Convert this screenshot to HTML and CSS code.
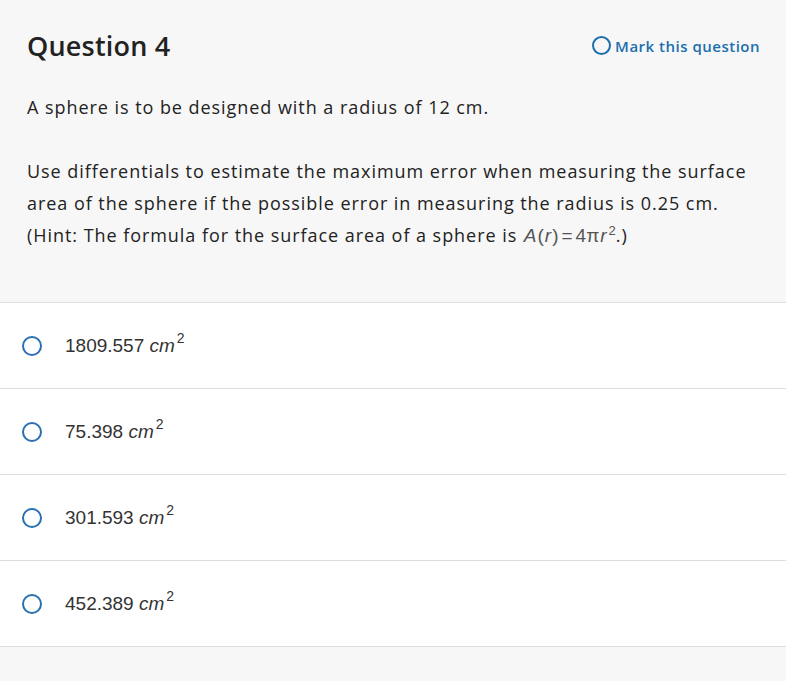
FILE: index.html
```html
<!DOCTYPE html>
<html lang="en">
<head>
    <meta charset="UTF-8">
    <meta name="viewport" content="width=device-width, initial-scale=1.0">
    <title>Question 4</title>
    <link rel="stylesheet" href="styles.css">
</head>
<body>
    <div class="question">
        <div class="question-head">
            <h2 class="question-title">Question 4</h2>
            <a class="mark" href="#">
                <span class="mark-circle"></span>
                Mark this question
            </a>
        </div>
        <p class="prompt">A sphere is to be designed with a radius of 12 cm.</p>
        <p class="prompt">Use differentials to estimate the maximum error when measuring the surface area of the sphere if the possible error in measuring the radius is 0.25 cm. (Hint: The formula for the surface area of a sphere is <span class="math"><i>A</i>(<i>r</i>)<span class="eq">=</span>4π<i>r</i><sup>2</sup></span>.)</p>
    </div>
    <ul class="answers">
        <li class="answer"><span class="radio"></span><span class="answer-text">1809.557 <i>cm</i><sup>2</sup></span></li>
        <li class="answer"><span class="radio"></span><span class="answer-text">75.398 <i>cm</i><sup>2</sup></span></li>
        <li class="answer"><span class="radio"></span><span class="answer-text">301.593 <i>cm</i><sup>2</sup></span></li>
        <li class="answer"><span class="radio"></span><span class="answer-text">452.389 <i>cm</i><sup>2</sup></span></li>
    </ul>
</body>
</html>
```

FILE: styles.css
```css
body {
    margin: 0;
    background-color: #f7f7f7;
    font-family: 'Open Sans', 'Lato', sans-serif;
    color: #222;
}
.question {
    padding: 30px 26px 50px 27px;
}
.question-head {
    display: flex;
    justify-content: space-between;
    align-items: center;
    margin-bottom: 30px;
}
.question-title {
    margin: 0;
    font-size: 27px;
    font-weight: 600;
    line-height: 31px;
    letter-spacing: 0.2px;
}
.mark {
    display: flex;
    align-items: center;
    gap: 4px;
    color: #1b6fad;
    font-size: 15px;
    font-weight: 600;
    letter-spacing: 0.5px;
    text-decoration: none;
}
.mark-circle {
    width: 15px;
    height: 15px;
    border: 2px solid #1b6fad;
    border-radius: 50%;
}
.prompt {
    margin: 0 0 32px;
    font-size: 18px;
    line-height: 32px;
    letter-spacing: 0.95px;
}
.prompt:last-child {
    margin-bottom: 0;
}
.math {
    color: #555;
    font-family: 'Liberation Sans', sans-serif;
    font-size: 19px;
    letter-spacing: 0;
}
.math i {
    padding: 0 1px;
}
.math .eq {
    margin: 0 3px;
}
.math sup {
    font-size: 13px;
    line-height: 0;
    margin-left: 1px;
}
.answers {
    list-style: none;
    margin: 0;
    padding: 0;
    background-color: #fff;
    border-top: 1px solid #ddd;
}
.answer {
    display: flex;
    align-items: center;
    height: 85px;
    padding-left: 22px;
    border-bottom: 1px solid #ddd;
}
.radio {
    width: 16px;
    height: 16px;
    border: 2px solid #2a6fb0;
    border-radius: 50%;
    margin-right: 23px;
}
.answer-text {
    font-family: 'Liberation Sans', sans-serif;
    font-size: 19px;
    color: #333;
}
.answer-text sup {
    font-size: 14px;
    line-height: 0;
    margin-left: 2px;
    vertical-align: 9px;
}
```
